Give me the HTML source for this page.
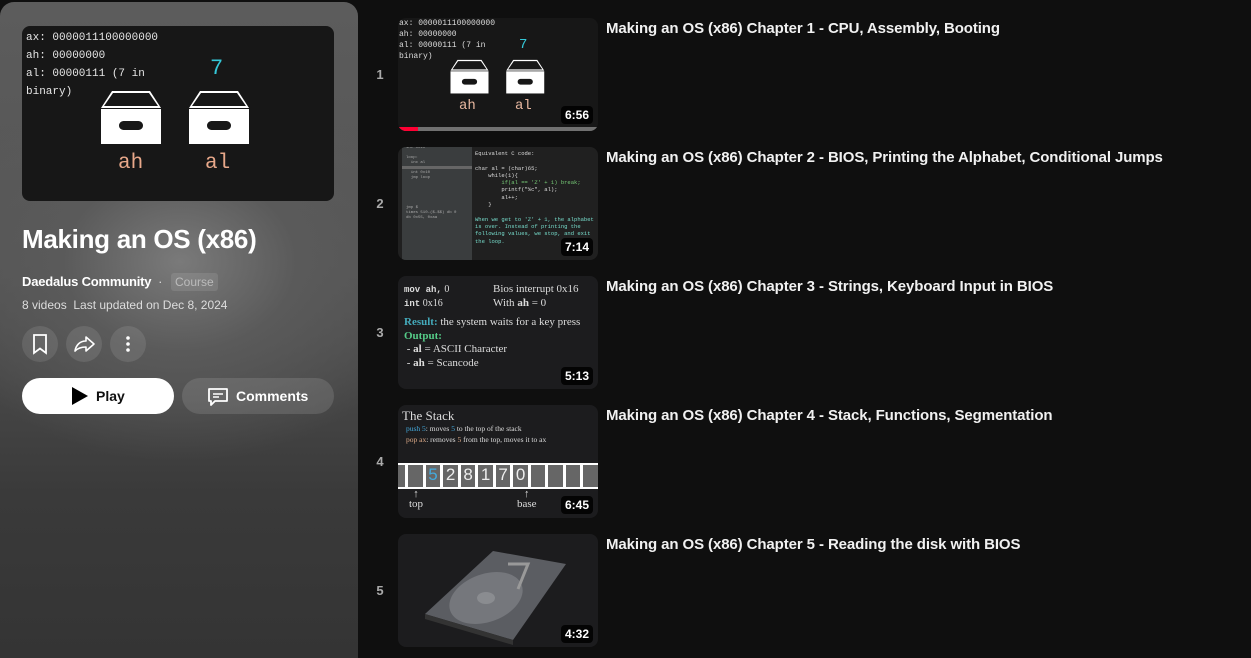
<!DOCTYPE html>
<html><head><style>
*{margin:0;padding:0;box-sizing:border-box}
body{width:1251px;height:658px;background:#0f0f0f;font-family:"Liberation Sans",sans-serif;color:#fff;position:relative;overflow:hidden}
.panel{position:absolute;left:0;top:2px;width:358px;height:656px;border-radius:14px 14px 0 0;background:radial-gradient(ellipse 260px 200px at 180px 260px,#7a7a7a 0%,#5a5a5a 45%,rgba(60,60,60,0) 100%),linear-gradient(#5c5c5c 0%,#555 40%,#3a3a3a 75%,#343434 100%)}
.mono{font-family:"Liberation Mono",monospace}
.thumb{position:absolute;background:#1a1a1a;border-radius:8px;overflow:hidden}
.dur{position:absolute;right:5px;bottom:4px;background:rgba(0,0,0,.85);color:#fff;font-size:12px;font-weight:bold;padding:2px 4px;border-radius:4px}
.num{position:absolute;left:375px;width:10px;text-align:center;color:#aaa;font-size:13px;font-weight:bold}
.title{position:absolute;left:606px;font-size:15px;font-weight:bold;color:#f1f1f1;letter-spacing:-0.1px}
.btn{position:absolute;border-radius:50%;width:36px;height:36px;background:rgba(255,255,255,.1)}
</style></head><body>
<div class="panel"></div>
<div class="thumb" style="left:22px;top:26px;width:312px;height:175px;background:#171717">
 <div class="mono" style="position:absolute;left:4px;top:3px;font-size:11px;line-height:18px;color:#e6e6e6">ax: 0000011100000000<br>ah: 00000000<br>al: 00000111 (7 in<br>binary)</div>
 <div class="mono" style="position:absolute;left:188px;top:30px;font-size:22px;color:#35c8d8">7</div>
 <svg style="position:absolute;left:79px;top:62px" width="150" height="60" viewBox="0 0 150 60"><path d="M0 20 L11 3 L49 3 L60 20 Z M3 18 L12 5 L48 5 L57 18Z" fill="#fff" fill-rule="evenodd"/><rect x="0" y="21" width="60" height="35" fill="#fff"/><rect x="18" y="33" width="24" height="9" rx="4.5" fill="#171717"/>
 <g transform="translate(88 0)"><path d="M0 20 L11 3 L49 3 L60 20 Z M3 18 L12 5 L48 5 L57 18Z" fill="#fff" fill-rule="evenodd"/><rect x="0" y="21" width="60" height="35" fill="#fff"/><rect x="18" y="33" width="24" height="9" rx="4.5" fill="#171717"/></g></svg>
 <div class="mono" style="position:absolute;left:96px;top:126px;font-size:21px;color:#e8a88a">ah</div>
 <div class="mono" style="position:absolute;left:183px;top:126px;font-size:21px;color:#e8a88a">al</div>
</div>
<div style="position:absolute;left:22px;top:224px;font-size:26px;font-weight:bold;letter-spacing:-0.3px">Making an OS (x86)</div>
<div style="position:absolute;left:22px;top:274px;font-size:13px;font-weight:bold;letter-spacing:-0.2px">Daedalus Community <span style="font-weight:normal;color:#ddd">&nbsp;·</span></div>
<div style="position:absolute;left:171px;top:273px;font-size:12px;color:#bbb;background:rgba(255,255,255,.1);padding:2px 4px;border-radius:3px">Course</div>
<div style="position:absolute;left:22px;top:298px;font-size:12px;color:#ddd">8 videos&nbsp; Last updated on Dec 8, 2024</div>
<div class="btn" style="left:22px;top:326px"><svg width="36" height="36"><path d="M12 9h12v18l-6-4.5-6 4.5z" fill="none" stroke="#fff" stroke-width="1.8"/></svg></div>
<div class="btn" style="left:66px;top:326px"><svg width="36" height="36"><path d="M20 11 l8 7 -8 7 v-4 c-5 0 -8 1 -11 4 c1 -6 5 -10 11 -10z" fill="none" stroke="#fff" stroke-width="1.6" stroke-linejoin="round"/></svg></div>
<div class="btn" style="left:110px;top:326px"><svg width="36" height="36"><circle cx="18" cy="12" r="1.8" fill="#fff"/><circle cx="18" cy="18" r="1.8" fill="#fff"/><circle cx="18" cy="24" r="1.8" fill="#fff"/></svg></div>
<div style="position:absolute;left:22px;top:378px;width:152px;height:36px;border-radius:18px;background:#fff;color:#0f0f0f;font-size:14px;font-weight:bold">
 <svg style="position:absolute;left:48px;top:9px" width="18" height="18"><path d="M2 0 L18 9 L2 18z" fill="#000"/></svg><span style="position:absolute;left:74px;top:10px">Play</span></div>
<div style="position:absolute;left:182px;top:378px;width:152px;height:36px;border-radius:18px;background:rgba(255,255,255,.12);font-size:14px;font-weight:bold">
 <svg style="position:absolute;left:24px;top:7px" width="24" height="24"><path d="M3 4h18v12H9l-4 4v-4H3z" fill="none" stroke="#fff" stroke-width="1.8" stroke-linejoin="round"/><path d="M7 9h10M7 12h6" stroke="#fff" stroke-width="1.6"/></svg><span style="position:absolute;left:54px;top:10px">Comments</span></div>

<div class="num" style="top:67px">1</div>
<div class="thumb" style="left:398px;top:18px;width:200px;height:113px;background:#171717">
 <div class="mono" style="position:absolute;left:1px;top:0;font-size:8px;line-height:11px;color:#ddd">ax: 0000011100000000<br>ah: 00000000<br>al: 00000111 (7 in<br>binary)</div>
 <div class="mono" style="position:absolute;left:121px;top:19px;font-size:14px;color:#35c8d8">7</div>
 <svg style="position:absolute;left:50px;top:40px" width="100" height="38" viewBox="0 0 150 60"><path d="M0 20 L11 3 L49 3 L60 20 Z M3 18 L12 5 L48 5 L57 18Z" fill="#fff" fill-rule="evenodd"/><rect x="0" y="21" width="60" height="35" fill="#fff"/><rect x="18" y="33" width="24" height="9" rx="4.5" fill="#171717"/><g transform="translate(88 0)"><path d="M0 20 L11 3 L49 3 L60 20 Z M3 18 L12 5 L48 5 L57 18Z" fill="#fff" fill-rule="evenodd"/><rect x="0" y="21" width="60" height="35" fill="#fff"/><rect x="18" y="33" width="24" height="9" rx="4.5" fill="#171717"/></g></svg>
 <div class="mono" style="position:absolute;left:61px;top:80px;font-size:14px;color:#e8b8a0">ah</div>
 <div class="mono" style="position:absolute;left:117px;top:80px;font-size:14px;color:#e8b8a0">al</div>
 <div class="dur" style="bottom:7px">6:56</div>
 <div style="position:absolute;left:0;bottom:0;width:200px;height:4px;background:#717171"></div>
 <div style="position:absolute;left:0;bottom:0;width:20px;height:4px;background:#f03"></div>
</div>
<div class="title" style="top:20px">Making an OS (x86) Chapter 1 - CPU, Assembly, Booting</div>

<div class="num" style="top:196px">2</div>
<div class="thumb" style="left:398px;top:147px;width:200px;height:113px;background:#202020">
 <div style="position:absolute;left:4px;top:0;width:70px;height:113px;background:#3a3d3e"></div>
 <div style="position:absolute;left:4px;top:19px;width:70px;height:3px;background:#666"></div>
 <div class="mono" style="position:absolute;left:8px;top:-1px;font-size:4px;line-height:5px;color:#aaa">int 0x10<br><br>loop:<br>&nbsp;&nbsp;inc al<br><br>&nbsp;&nbsp;int 0x10<br>&nbsp;&nbsp;jmp loop<br><br><br><br><br><br>jmp $<br>times 510-($-$$) db 0<br>db 0x55, 0xaa</div>
 <div class="mono" style="position:absolute;left:77px;top:3px;font-size:5.5px;line-height:7.3px;color:#ddd;white-space:pre">Equivalent C code:

char al = (char)65;
    while(1){
<span style="color:#7c7">        if(al == 'Z' + 1) break;</span>
        printf("%c", al);
        al++;
    }

<span style="color:#7dc">When we get to 'Z' + 1, the alphabet
is over. Instead of printing the
following values, we stop, and exit
the loop.</span></div>
 <div class="dur">7:14</div>
</div>
<div class="title" style="top:149px">Making an OS (x86) Chapter 2 - BIOS, Printing the Alphabet, Conditional Jumps</div>

<div class="num" style="top:325px">3</div>
<div class="thumb" style="left:398px;top:276px;width:200px;height:113px;background:#1c1c1e;font-family:'Liberation Serif',serif;font-size:10px;color:#ddd">
 <div style="position:absolute;left:6px;top:7px;line-height:14px"><b class="mono" style="font-size:9px">mov ah,</b> 0<br><b class="mono" style="font-size:9px">int</b> 0x16</div>
 <div style="position:absolute;left:95px;top:6px;line-height:14px;font-size:11px">Bios interrupt 0x16<br>With <b>ah</b> = 0</div>
 <div style="position:absolute;left:6px;top:40px;line-height:13.5px;font-size:11px"><b style="color:#4ab">Result:</b> the system waits for a key press<br><b style="color:#5c8">Output:</b><br>&nbsp;- <b>al</b> = ASCII Character<br>&nbsp;- <b>ah</b> = Scancode</div>
 <div class="dur" style="font-family:'Liberation Sans',sans-serif">5:13</div>
</div>
<div class="title" style="top:278px">Making an OS (x86) Chapter 3 - Strings, Keyboard Input in BIOS</div>

<div class="num" style="top:454px">4</div>
<div class="thumb" style="left:398px;top:405px;width:200px;height:113px;background:#1c1c1e;font-family:'Liberation Serif',serif;color:#ddd">
 <div style="position:absolute;left:4px;top:3px;font-size:13px">The Stack</div>
 <div style="position:absolute;left:8px;top:18px;font-size:7.5px;line-height:11px"><span style="color:#4ad">push 5</span>: moves <span style="color:#4ad">5</span> to the top of the stack<br><span style="color:#da8">pop ax</span>: removes <span style="color:#da8">5</span> from the top, moves it to ax</div>
 <div style="position:absolute;left:0;top:58px;width:200px;height:26px;background:#fff"></div>
 <div style="position:absolute;left:0;top:60px;width:200px;height:22px;display:flex;gap:3px;font-family:'Liberation Sans',sans-serif;font-size:17px;color:#eee">
  <div style="width:8px;background:#666"></div><div style="width:16px;background:#666"></div><div style="width:16px;background:#666;color:#4ad;text-align:center">5</div><div style="width:16px;background:#666;text-align:center">2</div><div style="width:16px;background:#666;text-align:center">8</div><div style="width:16px;background:#666;text-align:center">1</div><div style="width:16px;background:#666;text-align:center">7</div><div style="width:16px;background:#666;text-align:center">0</div><div style="width:16px;background:#666"></div><div style="width:16px;background:#666"></div><div style="width:16px;background:#666"></div><div style="width:16px;background:#666"></div></div>
 <div style="position:absolute;left:11px;top:84px;font-size:11px;line-height:10px;text-align:center">↑<br>top</div>
 <div style="position:absolute;left:119px;top:84px;font-size:11px;line-height:10px;text-align:center">↑<br>base</div>
 <div class="dur" style="font-family:'Liberation Sans',sans-serif">6:45</div>
</div>
<div class="title" style="top:407px">Making an OS (x86) Chapter 4 - Stack, Functions, Segmentation</div>

<div class="num" style="top:583px">5</div>
<div class="thumb" style="left:398px;top:534px;width:200px;height:113px;background:#1c1c1e">
 <svg width="200" height="113"><path d="M27 80 L95 17 L168 30 L115 106 Z" fill="#5b5d62"/><path d="M27 80 L115 106 L115 111 L27 85Z" fill="#333"/><ellipse cx="88" cy="64" rx="38" ry="24" fill="#75777c" transform="rotate(-20 88 64)"/><ellipse cx="88" cy="64" rx="9" ry="6" fill="#8a8c90"/><path d="M110 30 L130 30 L120 55" stroke="#999" stroke-width="3" fill="none"/></svg>
 <div class="dur">4:32</div>
</div>
<div class="title" style="top:536px">Making an OS (x86) Chapter 5 - Reading the disk with BIOS</div>
</body></html>
